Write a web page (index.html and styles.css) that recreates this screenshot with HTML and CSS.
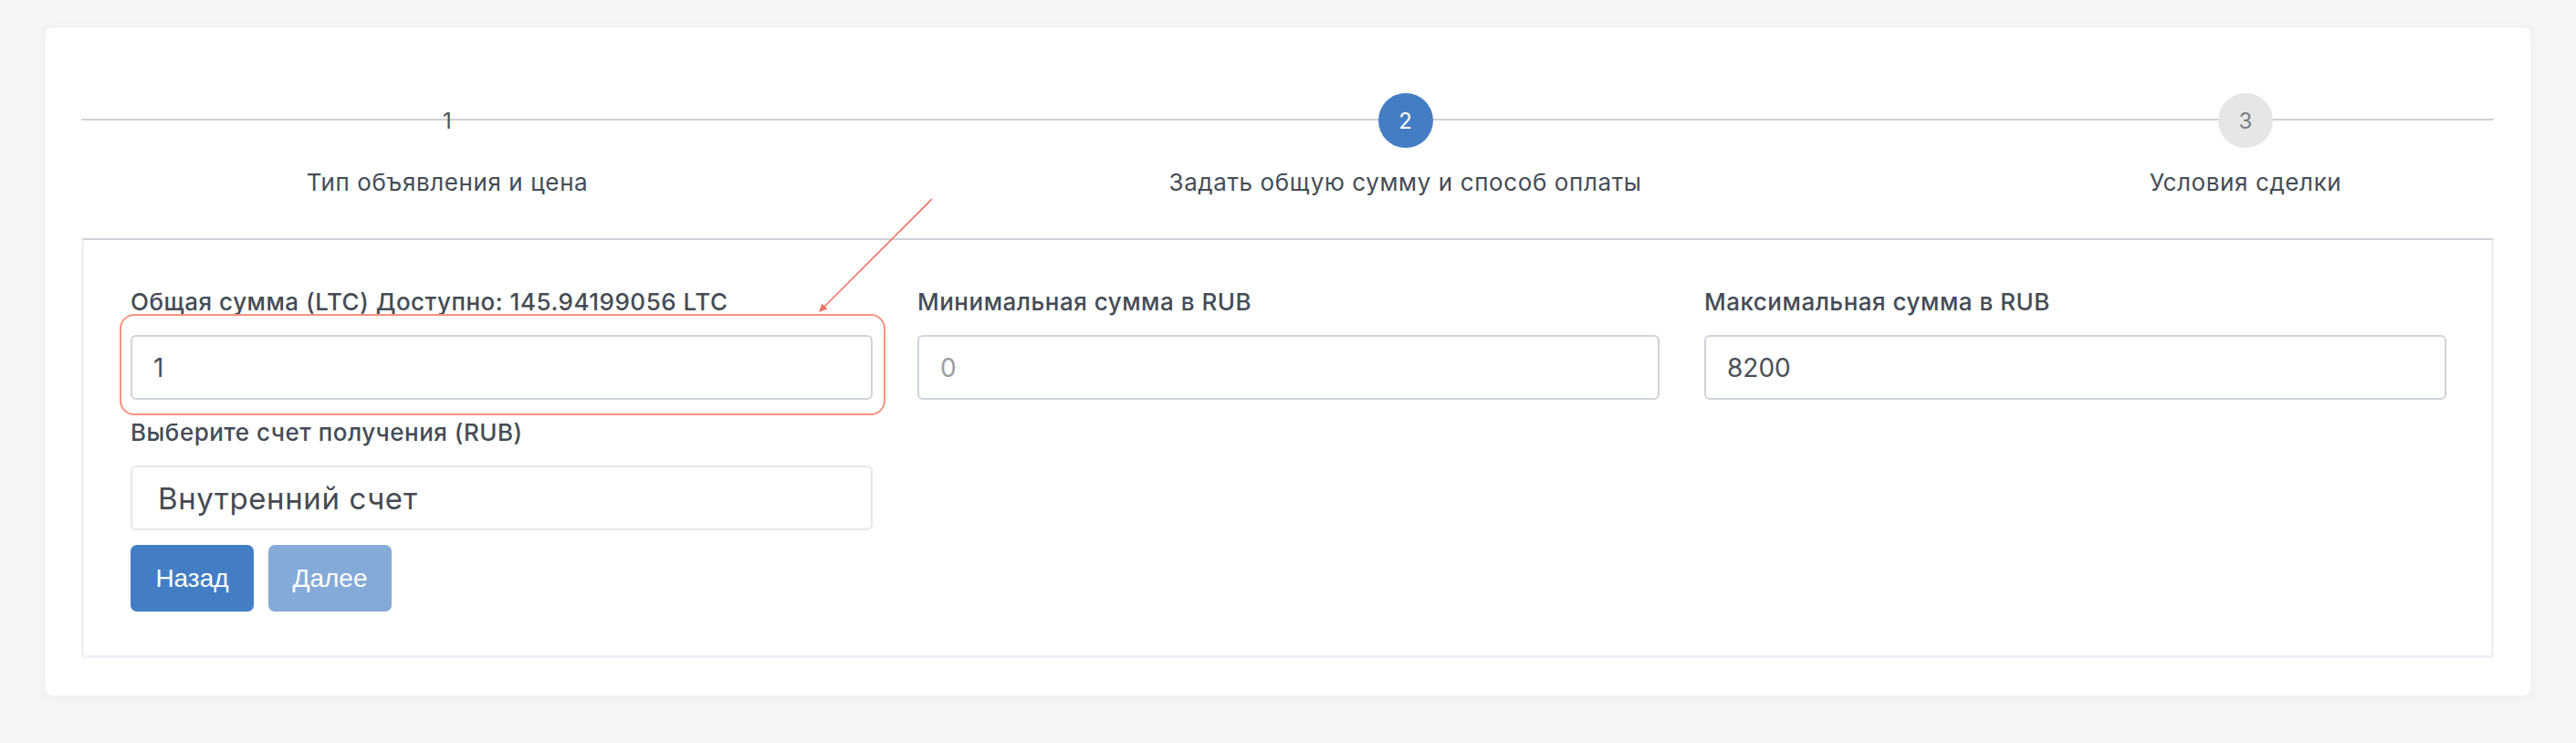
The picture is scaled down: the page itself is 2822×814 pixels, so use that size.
FILE: index.html
```html
<!DOCTYPE html>
<html lang="ru">
<head>
<meta charset="utf-8">
<title>Создание объявления</title>
<link rel="stylesheet" href="styles.css">
</head>
<body>
<div class="page">
  <div class="card">
    <div class="stepper">
      <div class="step step-done">
        <div class="step-num">1</div>
        <div class="step-label">Тип объявления и цена</div>
      </div>
      <div class="step step-active">
        <div class="step-num">2</div>
        <div class="step-label">Задать общую сумму и способ оплаты</div>
      </div>
      <div class="step step-next">
        <div class="step-num">3</div>
        <div class="step-label">Условия сделки</div>
      </div>
    </div>

    <div class="panel">
      <div class="form-grid">
        <div class="field">
          <div class="field-label">Общая сумма (LTC) Доступно: 145.94199056 LTC</div>
          <div class="input-wrap">
            <input class="input" type="text" value="1">
            <span class="highlight"></span>
          </div>
        </div>
        <div class="field">
          <div class="field-label">Минимальная сумма в RUB</div>
          <div class="input-wrap">
            <input class="input input-muted" type="text" value="0">
          </div>
        </div>
        <div class="field">
          <div class="field-label">Максимальная сумма в RUB</div>
          <div class="input-wrap">
            <input class="input" type="text" value="8200">
          </div>
        </div>
        <div class="field field-select">
          <div class="field-label">Выберите счет получения (RUB)</div>
          <div class="select">Внутренний счет</div>
        </div>
        <div class="actions">
          <button class="btn" type="button">Назад</button>
          <button class="btn btn-disabled" type="button">Далее</button>
        </div>
      </div>
    </div>

    <svg class="arrow" width="140" height="140" viewBox="0 0 140 140">
      <line x1="131" y1="8" x2="11" y2="128" stroke="#f5735e" stroke-width="1.6"/>
      <polygon points="7,132 16.5,128.5 10.5,122.5" fill="#f5735e"/>
    </svg>
  </div>
</div>
</body>
</html>
```

FILE: styles.css
```css
* {
  box-sizing: border-box;
}

html, body {
  margin: 0;
  background: #f4f5f7;
}

body {
  font-family: Inter, "Open Sans", "Noto Sans", sans-serif;
  color: #454c55;
}

.page {
  padding: 30px 50px 51px 50px;
}

.card {
  position: relative;
  background: #ffffff;
  border-radius: 8px;
  box-shadow: 0 2px 14px rgba(30, 40, 60, 0.04);
  padding: 72px 40px 41px 39px;
}

/* Stepper */
.stepper {
  position: relative;
  display: grid;
  grid-template-columns: 802px 1297px 544px;
}

.stepper::before {
  content: "";
  position: absolute;
  left: 0;
  right: 0;
  top: 28px;
  height: 2px;
  background: #cdd0d4;
}

.step {
  position: relative;
  display: flex;
  flex-direction: column;
  align-items: center;
}

.step-num {
  width: 60px;
  height: 60px;
  border-radius: 50%;
  display: flex;
  align-items: center;
  justify-content: center;
  font-size: 24px;
  line-height: 1;
  padding-top: 2px;
}

.step-done .step-num {
  background: transparent;
  color: #4a5058;
}

.step-active .step-num {
  background: #437ec4;
  color: #ffffff;
}

.step-next .step-num {
  background: #e6e6e6;
  color: #7a7d82;
}

.step-label {
  margin-top: 20px;
  font-size: 26px;
  letter-spacing: 0.6px;
  line-height: 36px;
  color: #454c55;
  white-space: nowrap;
}

/* Panel */
.panel {
  margin-top: 43px;
  border-top: 2px solid #cdd0d4;
  border-left: 3px solid #f0f1f4;
  border-right: 3px solid #f0f1f4;
  border-bottom: 3px solid #f0f1f4;
  padding: 50px 49px 48px 51px;
}

.form-grid {
  display: grid;
  grid-template-columns: repeat(3, 1fr);
  column-gap: 49px;
  align-items: start;
}

.field-label {
  font-size: 26px;
  letter-spacing: 0.5px;
  font-weight: 500;
  line-height: 36px;
  color: #454c55;
  margin-bottom: 18px;
  white-space: nowrap;
}

.input-wrap {
  position: relative;
}

.input {
  display: block;
  width: 100%;
  height: 71px;
  border: 2px solid #d0d3d8;
  border-radius: 6px;
  background: #ffffff;
  padding: 0 23px;
  font-family: Inter, "Open Sans", "Noto Sans", sans-serif;
  font-size: 28px;
  color: #4a4f56;
  outline: none;
}

.input-muted {
  color: #9a9da2;
}

.highlight {
  position: absolute;
  top: -23px;
  left: -12px;
  right: -14px;
  bottom: -17px;
  border: 2px solid #f7937f;
  border-radius: 16px;
  pointer-events: none;
}

.field-select {
  grid-column: 1;
  margin-top: 18px;
}

.select {
  height: 71px;
  border: 2px solid #e6e7e9;
  border-radius: 6px;
  background: #ffffff;
  display: flex;
  align-items: center;
  padding: 0 28px;
  font-size: 33px;
  letter-spacing: 0.6px;
  color: #454a52;
}

.actions {
  grid-column: 1;
  margin-top: 16px;
  display: flex;
  gap: 16px;
}

.btn {
  width: 135px;
  height: 73px;
  border: none;
  border-radius: 7px;
  background: #437ec4;
  color: #ffffff;
  font-family: "Liberation Sans", Arial, sans-serif;
  font-size: 28px;
  padding: 0;
}

.btn-disabled {
  opacity: 0.65;
}

.arrow {
  position: absolute;
  left: 840px;
  top: 180px;
  pointer-events: none;
}
```
